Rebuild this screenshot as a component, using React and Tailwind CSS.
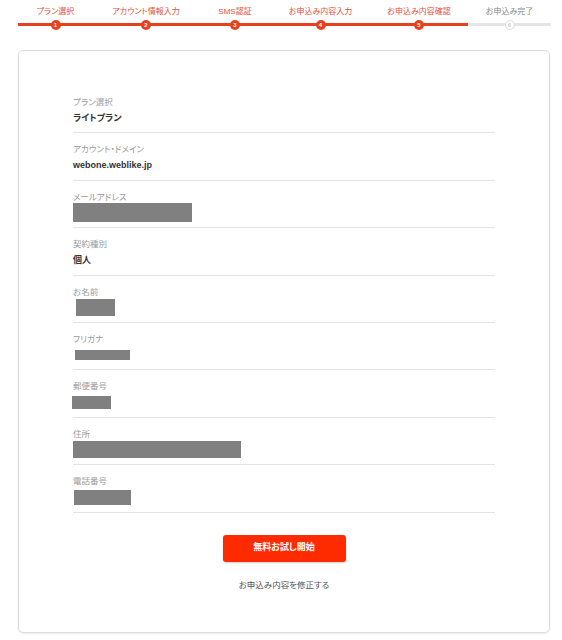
import React from 'react';

const FONT = "font-['Liberation_Sans','Noto_Sans_CJK_JP',sans-serif] [font-feature-settings:'palt']";

const STEPS = [
    { label: 'プラン選択', w: 'w-[75px]', done: true },
    { label: 'アカウント情報入力', w: 'w-[106px]', done: true },
    { label: 'SMS認証', w: 'w-[72px]', done: true },
    { label: 'お申込み内容入力', w: 'w-[99px]', done: true },
    { label: 'お申込み内容確認', w: 'w-[98px]', done: true },
    { label: 'お申込み完了', w: 'w-[83px]', done: false },
];

// masked values are grey blocks (w, h, x-offset)
const ROWS = [
    { label: 'プラン選択', value: 'ライトプラン' },
    { label: 'アカウント・ドメイン', value: 'webone.weblike.jp' },
    { label: 'メールアドレス', mask: 'w-[119px] h-[19px]' },
    { label: '契約種別', value: '個人' },
    { label: 'お名前', mask: 'w-[39px] h-[17px] ml-[3px]' },
    { label: 'フリガナ', mask: 'w-[55px] h-[10px] ml-[2px]' },
    { label: '郵便番号', mask: 'w-[39px] h-[13px] -ml-[1px]' },
    { label: '住所', mask: 'w-[168px] h-[17px]' },
    { label: '電話番号', mask: 'w-[57px] h-[15px] ml-[1px]' },
];

const Stepper = () => (
    <div className="flex ml-[18px] pt-[7px]">
        {STEPS.map((s, i) => (
            <div key={s.label} className={`${s.w} flex flex-col items-center`}>
                <span className={`text-[8px] leading-[10px] whitespace-nowrap ${s.done ? 'text-[#e0503a]' : 'text-[#888]'}`}>
                    {s.label}
                </span>
                <div className="relative w-full h-[9px] mt-[3px] flex items-center justify-center">
                    <div className={`absolute left-0 right-0 top-[3px] h-[3px] ${s.done ? 'bg-[#e8401c]' : 'bg-[#e6e6e6]'}`} />
                    <div
                        className={`relative w-[10px] h-[10px] rounded-full flex items-center justify-center text-[6px] font-bold leading-none ${s.done ? 'bg-[#e8401c] text-white' : 'bg-white border border-[#ddd] text-[#ccc]'}`}
                    >
                        {i + 1}
                    </div>
                </div>
            </div>
        ))}
    </div>
);

export default function App() {
    return (
        <div className={`${FONT} bg-white w-[562px] h-[640px] overflow-hidden`}>
            <Stepper />
            <div className="ml-[18px] mt-[21px] w-[532px] h-[583px] border border-[#dcdcdc] rounded-[5px] shadow-[0_1px_2px_rgba(0,0,0,0.08)] pt-[35px] px-[54px]">
                {ROWS.map((r) => (
                    <div key={r.label} className="border-b border-[#e4e4e4] pt-[11px] pb-[9.4px]">
                        <div className="text-[8.5px] leading-[10px] text-[#9a9a9a]">{r.label}</div>
                        <div className="mt-[6px] h-[10px] flex items-center">
                            {r.mask ? (
                                <div className={`${r.mask} bg-[#808080] shrink-0`} />
                            ) : (
                                <span className="text-[9px] leading-[10px] font-bold text-[#333]">{r.value}</span>
                            )}
                        </div>
                    </div>
                ))}
                <div className="flex flex-col items-center">
                    <button
                        type="button"
                        className="mt-[22px] w-[123px] h-[27px] bg-[#ff2b00] rounded-[3px] text-white text-[9px] font-bold shadow-[0_1px_2px_rgba(0,0,0,0.2)] flex items-center justify-center"
                    >
                        無料お試し開始
                    </button>
                    <span className="mt-[18px] text-[8.5px] leading-[10px] text-[#555]">お申込み内容を修正する</span>
                </div>
            </div>
        </div>
    );
}
